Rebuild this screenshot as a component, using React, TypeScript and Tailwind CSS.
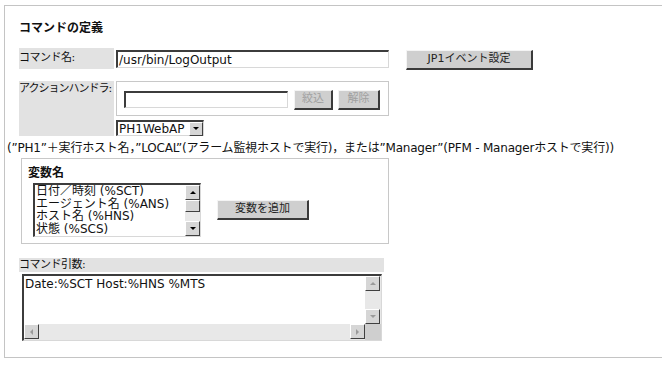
const font = "font-['DejaVu_Sans','Noto_Sans_CJK_JP',sans-serif]";

const Arrow = ({ dir, dim }: { dir: "up" | "down" | "left" | "right"; dim?: boolean }) => {
  const pts = {
    up: "1,5 4,2 7,5",
    down: "1,2 4,5 7,2",
    left: "5,1 2,4 5,7",
    right: "2,1 5,4 2,7",
  }[dir];
  return (
    <svg width="8" height="8" viewBox="0 0 8 8">
      <polygon points={pts} fill={dim ? "#9a9a9a" : "#000"} />
    </svg>
  );
};

const ScrollBtn = ({ dir, dim }: { dir: "up" | "down" | "left" | "right"; dim?: boolean }) => (
  <div className="w-[15px] h-[15px] bg-[#d6d6d6] border border-t-white border-l-white border-r-[#404040] border-b-[#404040] flex items-center justify-center">
    <Arrow dir={dir} dim={dim} />
  </div>
);

const Btn = ({ label, disabled, w }: { label: string; disabled?: boolean; w: string }) => (
  <div
    className={`${w} h-[20px] bg-[#cfcfcf] border-t border-l border-t-[#f4f4f4] border-l-[#f4f4f4] border-r-2 border-b-2 border-r-[#3a3a3a] border-b-[#3a3a3a] flex items-center justify-center text-[11px] ${
      disabled ? "text-[#a0a0a0]" : "text-[#222]"
    }`}
  >
    {label}
  </div>
);

const Inset = ({ className, children }: { className: string; children?: React.ReactNode }) => (
  <div
    className={`border-t-2 border-l-2 border-t-[#3c3c3c] border-l-[#3c3c3c] border-r border-b border-r-[#d8d8d8] border-b-[#d8d8d8] bg-white ${className}`}
  >
    {children}
  </div>
);

const vars = ["日付／時刻 (%SCT)", "エージェント名 (%ANS)", "ホスト名 (%HNS)", "状態 (%SCS)"];

export default function App() {
  return (
    <div className={`w-[665px] h-[365px] bg-white pt-[5px] pl-[4px] text-[#111] ${font}`}>
      <div className="w-[658px] h-[353px] border-t border-l border-b border-[#c4c4c4] pl-[14px] pt-[14px]">
        {/* Heading */}
        <div className="text-[12px] font-bold leading-[16px]">コマンドの定義</div>

        {/* Command name */}
        <div className="flex items-start mt-[12px]">
          <div className="w-[95px] h-[21px] bg-[#e2e2e2] flex items-center text-[11px] tracking-[-0.5px]">コマンド名:</div>
          <Inset className="ml-[2px] mt-[2px] w-[273px] h-[18px] flex items-center pl-[1px] text-[12px] leading-none">
            /usr/bin/LogOutput
          </Inset>
          <div className="ml-[17px] mt-[2px]">
            <Btn label="JP1イベント設定" w="w-[127px]" />
          </div>
        </div>

        {/* Action handler */}
        <div className="flex items-start mt-[11px]">
          <div className="w-[95px] h-[55px] bg-[#e2e2e2] text-[11px] leading-[14px] pt-[1px] whitespace-nowrap tracking-[-1px]">
            アクションハンドラ:
          </div>
          <div className="ml-[2px] flex flex-col">
            <div className="w-[273px] h-[35px] border border-[#c8c8c8] flex items-start pl-[7px] pt-[8px]">
              <Inset className="w-[164px] h-[17px] mt-[1px]" />
              <div className="ml-[6px]">
                <Btn label="絞込" disabled w="w-[39px]" />
              </div>
              <div className="ml-[5px]">
                <Btn label="解除" disabled w="w-[42px]" />
              </div>
            </div>
            <Inset className="mt-[4px] w-[88px] h-[16px] flex items-center justify-between pl-[1px] text-[12px] leading-none">
              <span>PH1WebAP</span>
              <div className="w-[14px] h-[14px] bg-[#d6d6d6] border border-t-white border-l-white border-r-[#404040] border-b-[#404040] flex items-center justify-center">
                <Arrow dir="down" />
              </div>
            </Inset>
          </div>
        </div>

        {/* Description */}
        <div className="mt-[5px] -ml-[12px] text-[12px] leading-[14px] whitespace-nowrap tracking-[-0.2px]">
          (”PH1”＋実行ホスト名，”LOCAL”(アラーム監視ホストで実行)，または”Manager”(PFM - Managerホストで実行))
        </div>

        {/* Variables */}
        <div className="mt-[3px] ml-[2px] w-[368px] h-[86px] border border-[#c8c8c8] pl-[6px] pt-[6px]">
          <div className="text-[12px] font-bold leading-[16px]">変数名</div>
          <div className="flex items-start mt-[2px] ml-[5px]">
            <Inset className="w-[168px] h-[54px] flex">
              <div className="flex-1 text-[12px] leading-[12.6px] pl-[1px] whitespace-nowrap overflow-hidden">
                {vars.map((v) => (
                  <div key={v}>{v}</div>
                ))}
              </div>
              <div className="w-[15px] flex flex-col bg-[#e8e8e8]">
                <ScrollBtn dir="up" />
                <div className="h-[12px] bg-[#d6d6d6] border border-t-white border-l-white border-r-[#404040] border-b-[#404040]" />
                <div className="flex-1" />
                <ScrollBtn dir="down" />
              </div>
            </Inset>
            <div className="ml-[16px] mt-[17px]">
              <Btn label="変数を追加" w="w-[92px]" />
            </div>
          </div>
        </div>

        {/* Command arguments */}
        <div className="mt-[14px] w-[365px] h-[14px] bg-[#e2e2e2] text-[11px] leading-[14px] tracking-[-0.5px]">コマンド引数:</div>
        <Inset className="ml-[3px] mt-[2px] w-[360px] h-[67px] grid grid-cols-[1fr_16px] grid-rows-[1fr_16px]">
          <div className="text-[12px] leading-[14px] pl-[1px] pt-[1px]">Date:%SCT Host:%HNS %MTS</div>
          <div className="flex flex-col justify-between bg-[#e8e8e8]">
            <ScrollBtn dir="up" dim />
            <ScrollBtn dir="down" dim />
          </div>
          <div className="flex justify-between bg-[#e8e8e8]">
            <ScrollBtn dir="left" dim />
            <ScrollBtn dir="right" dim />
          </div>
          <div className="bg-[#cfcfcf]" />
        </Inset>
      </div>
    </div>
  );
}
